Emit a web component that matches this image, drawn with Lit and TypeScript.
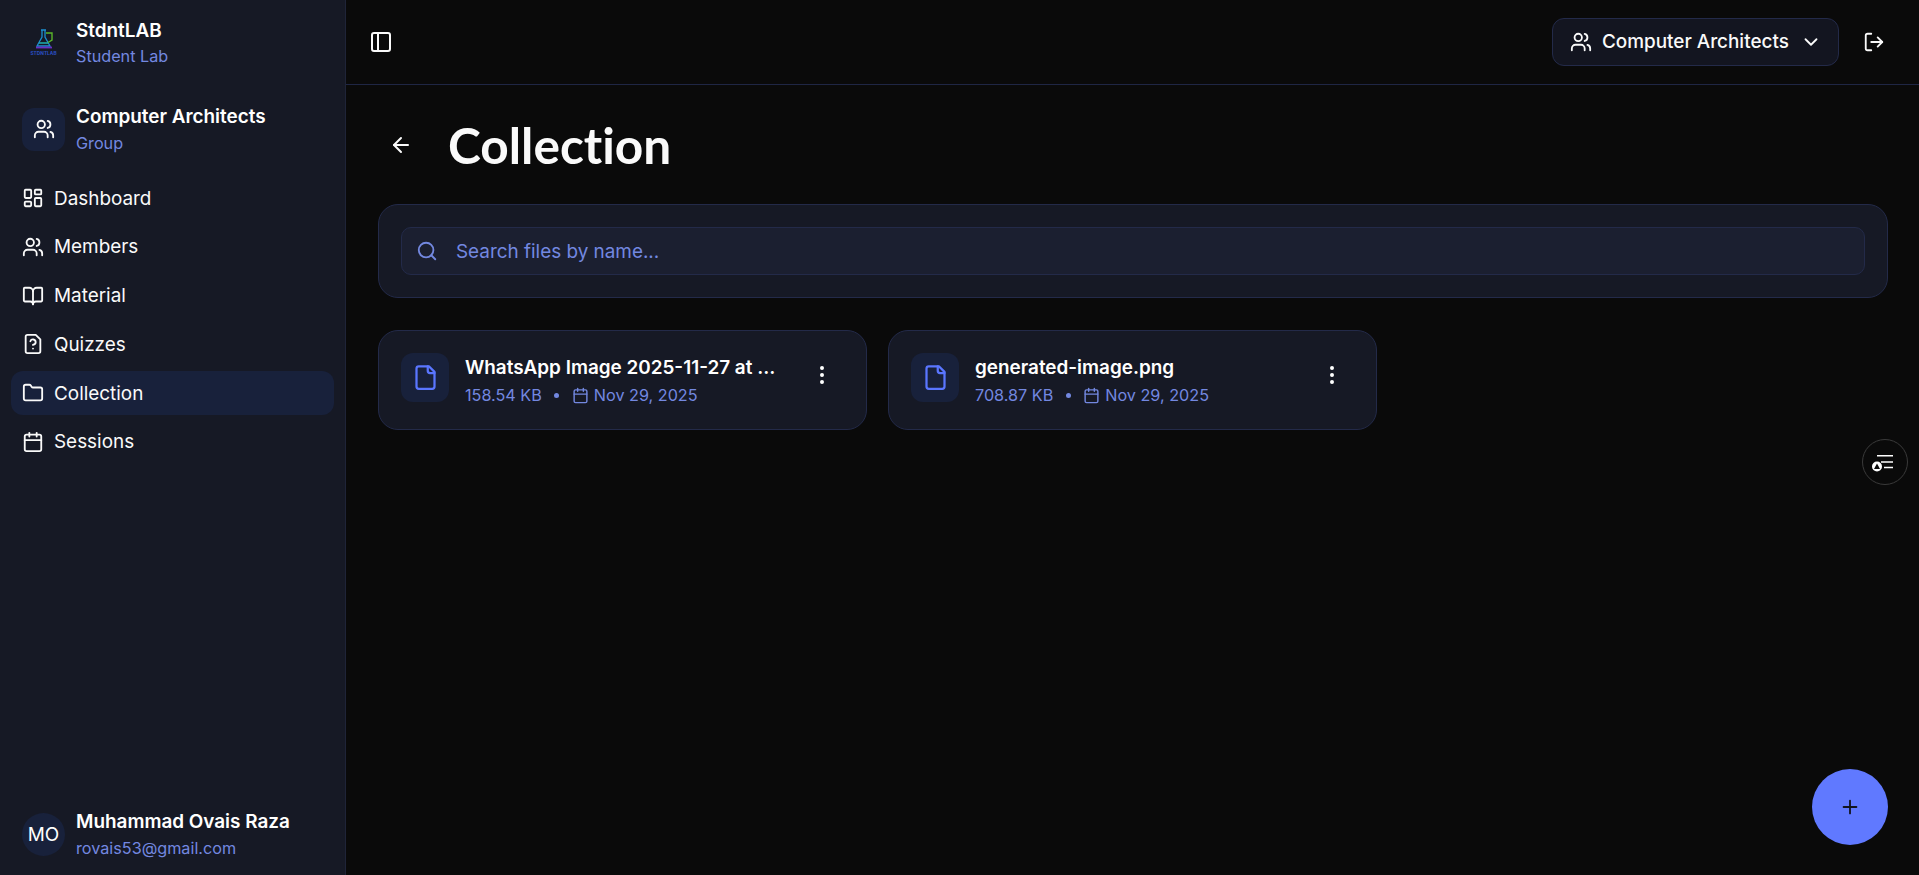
import { LitElement, html, css, svg } from "lit";
import { customElement } from "lit/decorators.js";

const icons: Record<string, unknown> = {
  dashboard: svg`<rect x="3" y="3" width="7" height="9" rx="1"/><rect x="14" y="3" width="7" height="5" rx="1"/><rect x="14" y="12" width="7" height="9" rx="1"/><rect x="3" y="16" width="7" height="5" rx="1"/>`,
  users: svg`<path d="M16 21v-2a4 4 0 0 0-4-4H6a4 4 0 0 0-4 4v2"/><path d="M16 3.128a4 4 0 0 1 0 7.744"/><path d="M22 21v-2a4 4 0 0 0-3-3.87"/><circle cx="9" cy="7" r="4"/>`,
  book: svg`<path d="M12 7v14"/><path d="M3 18a1 1 0 0 1-1-1V4a1 1 0 0 1 1-1h5a4 4 0 0 1 4 4 4 4 0 0 1 4-4h5a1 1 0 0 1 1 1v13a1 1 0 0 1-1 1h-6a3 3 0 0 0-3 3 3 3 0 0 0-3-3z"/>`,
  quiz: svg`<path d="M12 17h.01"/><path d="M15 2H6a2 2 0 0 0-2 2v16a2 2 0 0 0 2 2h12a2 2 0 0 0 2-2V7z"/><path d="M9.1 9a3 3 0 0 1 5.82 1c0 2-3 3-3 3"/>`,
  folder: svg`<path d="M20 20a2 2 0 0 0 2-2V8a2 2 0 0 0-2-2h-7.9a2 2 0 0 1-1.69-.9L9.6 3.9A2 2 0 0 0 7.93 3H4a2 2 0 0 0-2 2v13a2 2 0 0 0 2 2Z"/>`,
  calendar: svg`<path d="M8 2v4"/><path d="M16 2v4"/><rect x="3" y="4" width="18" height="18" rx="2"/><path d="M3 10h18"/>`,
  panel: svg`<rect x="3" y="3" width="18" height="18" rx="2"/><path d="M9 3v18"/>`,
  chevron: svg`<path d="m6 9 6 6 6-6"/>`,
  logout: svg`<path d="m16 17 5-5-5-5"/><path d="M21 12H9"/><path d="M9 21H5a2 2 0 0 1-2-2V5a2 2 0 0 1 2-2h4"/>`,
  back: svg`<path d="m12 19-7-7 7-7"/><path d="M19 12H5"/>`,
  search: svg`<path d="m21 21-4.34-4.34"/><circle cx="11" cy="11" r="8"/>`,
  file: svg`<path d="M15 2H6a2 2 0 0 0-2 2v16a2 2 0 0 0 2 2h12a2 2 0 0 0 2-2V7Z"/><path d="M14 2v4a2 2 0 0 0 2 2h4"/>`,
  more: svg`<circle cx="12" cy="5" r="1"/><circle cx="12" cy="12" r="1"/><circle cx="12" cy="19" r="1"/>`,
  plus: svg`<path d="M5 12h14"/><path d="M12 5v14"/>`,
};

const icon = (name: string, cls = "") =>
  html`<svg class="ic ${cls}" viewBox="0 0 24 24" fill="none" stroke="currentColor" stroke-width="2" stroke-linecap="round" stroke-linejoin="round">${icons[name]}</svg>`;

const nav = [
  ["dashboard", "Dashboard"],
  ["users", "Members"],
  ["book", "Material"],
  ["quiz", "Quizzes"],
  ["folder", "Collection"],
  ["calendar", "Sessions"],
];

const files = [
  { name: "WhatsApp Image 2025-11-27 at 10.42.15 PM.jpeg", size: "158.54 KB", date: "Nov 29, 2025" },
  { name: "generated-image.png", size: "708.87 KB", date: "Nov 29, 2025" },
];

@customElement("app-root")
export class AppRoot extends LitElement {
  static styles = css`
    :host {
      display: flex;
      position: relative;
      width: 100%;
      height: 875px;
      overflow: hidden;
      background: #0a0a0a;
      color: #fafafa;
      font-family: Inter, "Noto Sans", sans-serif;
      font-size: 18.9px;
    }
    .ic { width: 22px; height: 22px; flex: none; display: block; }
    .sidebar {
      width: 346px;
      flex: none;
      box-sizing: border-box;
      background: #161925;
      border-right: 1px solid #1f2438;
      display: flex;
      flex-direction: column;
    }
    .brand { display: flex; align-items: center; gap: 11px; padding: 0 22px; margin-top: 18px; height: 50px; }
    .logo { width: 43px; height: 43px; flex: none; display: block; }
    .two { display: flex; flex-direction: column; min-width: 0; }
    .t { font-weight: 600; line-height: 26px; color: #fff; white-space: nowrap; }
    .s { font-size: 16.2px; line-height: 24px; color: #7388e0; white-space: nowrap; }
    .group .s, .user .s { padding-top: 1px; }
    .group { display: flex; align-items: center; gap: 11px; padding: 0 22px; margin-top: 36px; height: 50px; }
    .avatar {
      width: 43px; height: 43px; flex: none; border-radius: 12px;
      background: #18213b; display: flex; align-items: center; justify-content: center;
    }
    .avatar.round { border-radius: 50%; font-size: 18.9px; color: #fff; }
    .nav { display: flex; flex-direction: column; gap: 4.8px; padding: 0 11px; margin-top: 22px; }
    .item {
      display: flex; align-items: center; gap: 10px; height: 44px; padding: 0 11px;
      border-radius: 12px; color: #fafafa;
    }
    .item.active { background: #18213b; }
    .spacer { flex: 1; }
    .user { display: flex; align-items: center; gap: 11px; padding: 0 22px; height: 50px; margin-bottom: 16px; }
    .main { flex: 1; min-width: 0; display: flex; flex-direction: column; }
    .header {
      height: 85px; flex: none; box-sizing: border-box;
      border-bottom: 1px solid #1f2644;
      display: flex; align-items: center; justify-content: space-between;
      padding: 0 34px 0 23px;
    }
    .header > .ic { width: 24px; height: 24px; }
    .right { display: flex; align-items: center; gap: 24px; }
    .picker {
      display: flex; align-items: center; gap: 10px; height: 48px; box-sizing: border-box;
      padding: 0 16px 0 17px; width: 287px; margin-top: -1px;
      background: #131520; border: 1px solid #232a49; border-radius: 12px;
      font-weight: 500; color: #fafafa; white-space: nowrap;
    }
    .picker .name { flex: 1; padding-bottom: 1px; }
    .content { padding: 0 31px 0 32px; display: flex; flex-direction: column; }
    .title-row { display: flex; align-items: center; gap: 35px; height: 119px; padding-left: 11px; }
    .title-row .ic { width: 24px; height: 24px; }
    h1 {
      margin: 2px 0 0; font-family: Lato, sans-serif; font-weight: 700; font-size: 49.6px; line-height: 1;
      color: #fafafa; font-variant-ligatures: none;
    }
    .search-card {
      box-sizing: border-box; height: 94px; padding: 22px;
      background: #161925; border: 1px solid #232a49; border-radius: 20px;
    }
    .search {
      box-sizing: border-box; height: 48px; display: flex; align-items: center; gap: 18px; padding: 0 14px;
      background: #1b1f30; border: 1px solid #232a49; border-radius: 10px; color: #7388e0;
    }
    .grid { display: grid; grid-template-columns: repeat(2, 489px); gap: 21px; margin-top: 32px; }
    .card {
      box-sizing: border-box; height: 100px; padding: 0 22px; display: flex; align-items: center; gap: 16px;
      background: #161925; border: 1px solid #232a49; border-radius: 20px;
    }
    .fileicon {
      width: 48px; height: 49px; flex: none; border-radius: 12px; background: #18213b; color: #5a76ff;
      display: flex; align-items: center; justify-content: center; margin-top: -5px;
    }
    .fileicon .ic { width: 27px; height: 27px; }
    .info { flex: 1; min-width: 0; padding-top: 2px; margin-right: 8px; }
    .fname { font-weight: 600; line-height: 26px; color: #fff; overflow: hidden; text-overflow: ellipsis; white-space: nowrap; }
    .meta { display: flex; align-items: center; gap: 12.5px; font-size: 16.2px; line-height: 24px; color: #7388e0; margin-top: 2px; white-space: nowrap; }
    .dot { width: 5px; height: 5px; border-radius: 50%; background: #7388e0; }
    .date { display: flex; align-items: center; gap: 5px; }
    .date .ic { width: 17px; height: 17px; }
    .kebab { width: 44px; flex: none; display: flex; justify-content: center; color: #fff; margin-top: -10px; }
    .kebab .ic { width: 24px; height: 24px; }
    .a11y {
      position: absolute; left: 1862px; top: 439px; width: 46px; height: 46px; box-sizing: border-box;
      border-radius: 50%; border: 1px solid #3a3a3a; background: #0a0a0a;
      display: flex; align-items: center; justify-content: center;
    }
    .a11y svg { width: 26px; height: 26px; display: block; }
    .fab {
      position: absolute; left: 1812px; top: 769px; width: 76px; height: 76px; border-radius: 50%;
      background: #6079ff; color: #12141f; display: flex; align-items: center; justify-content: center;
    }
  `;

  render() {
    return html`
      <aside class="sidebar">
        <div class="brand">
          <svg class="logo" viewBox="0 0 43 43" fill="none">
            <path d="M19 8h5M20 8v7l-5 9h13l-5-9V8" stroke="#1c8fd0" stroke-width="1.3"/>
            <path d="M17 21h9" stroke="#1fb0b0" stroke-width="1.5"/>
            <path d="M24 11h6v7l-4 2.5" stroke="#5ab52a" stroke-width="1.4"/>
            <path d="M14 25.5h16" stroke="#6a2fc4" stroke-width="1.8"/>
            <text x="21.5" y="33" text-anchor="middle" font-family="Inter, sans-serif" font-size="4.8" font-weight="700" fill="#2a4fc4">STDNTLAB</text>
          </svg>
          <div class="two"><span class="t">StdntLAB</span><span class="s">Student Lab</span></div>
        </div>
        <div class="group">
          <div class="avatar">${icon("users")}</div>
          <div class="two"><span class="t">Computer Architects</span><span class="s">Group</span></div>
        </div>
        <nav class="nav">
          ${nav.map(
            ([ic, label]) => html`<div class="item ${label === "Collection" ? "active" : ""}">${icon(ic)}<span>${label}</span></div>`
          )}
        </nav>
        <div class="spacer"></div>
        <div class="user">
          <div class="avatar round">MO</div>
          <div class="two"><span class="t">Muhammad Ovais Raza</span><span class="s">rovais53@gmail.com</span></div>
        </div>
      </aside>
      <div class="main">
        <header class="header">
          ${icon("panel")}
          <div class="right">
            <div class="picker">${icon("users")}<span class="name">Computer Architects</span>${icon("chevron")}</div>
            ${icon("logout")}
          </div>
        </header>
        <div class="content">
          <div class="title-row">${icon("back")}<h1>Collection</h1></div>
          <div class="search-card">
            <div class="search">${icon("search")}<span>Search files by name...</span></div>
          </div>
          <div class="grid">
            ${files.map(
              (f) => html`<div class="card">
                <div class="fileicon">${icon("file")}</div>
                <div class="info">
                  <div class="fname">${f.name}</div>
                  <div class="meta"><span>${f.size}</span><span class="dot"></span><span class="date">${icon("calendar")}${f.date}</span></div>
                </div>
                <div class="kebab">${icon("more")}</div>
              </div>`
            )}
          </div>
        </div>
      </div>
      <div class="a11y">
        <svg viewBox="0 0 26 26" fill="none">
          <path d="M5 6.7h16M9 13h12M12 18.5h9" stroke="#fff" stroke-width="1.4"/>
          <circle cx="5" cy="17.5" r="5" fill="#fff"/>
          <path d="M5 14.5l3 5.5H2z" fill="#0a0a0a"/>
        </svg>
      </div>
      <div class="fab">${icon("plus")}</div>
    `;
  }
}
